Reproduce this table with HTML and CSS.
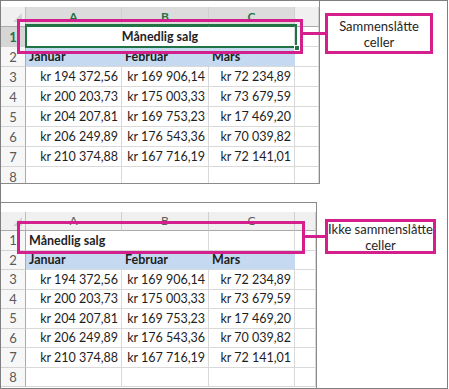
FILE: index.html
```html
<!DOCTYPE html>
<html lang="no">
<head>
<meta charset="utf-8">
<title>Sammenslåtte celler</title>
<link rel="stylesheet" href="styles.css">
</head>
<body>
<div class="frame">
  <div class="sheets">
    <div class="sheet sheet-top">
      <div class="grid">
        <div class="corner"></div>
        <div class="ch sel">A</div>
        <div class="ch sel">B</div>
        <div class="ch sel">C</div>
        <div class="ch"></div>

        <div class="rh rh-sel">1</div>
        <div class="c merged">Månedlig salg</div>
        <div class="c"></div>

        <div class="rh">2</div>
        <div class="c hd">Januar</div>
        <div class="c hd">Februar</div>
        <div class="c hd">Mars</div>
        <div class="c"></div>

        <div class="rh">3</div>
        <div class="c num">kr 194 372,56</div>
        <div class="c num">kr 169 906,14</div>
        <div class="c num">kr 72 234,89</div>
        <div class="c"></div>

        <div class="rh">4</div>
        <div class="c num">kr 200 203,73</div>
        <div class="c num">kr 175 003,33</div>
        <div class="c num">kr 73 679,59</div>
        <div class="c"></div>

        <div class="rh">5</div>
        <div class="c num">kr 204 207,81</div>
        <div class="c num">kr 169 753,23</div>
        <div class="c num">kr 17 469,20</div>
        <div class="c"></div>

        <div class="rh">6</div>
        <div class="c num">kr 206 249,89</div>
        <div class="c num">kr 176 543,36</div>
        <div class="c num">kr 70 039,82</div>
        <div class="c"></div>

        <div class="rh">7</div>
        <div class="c num">kr 210 374,88</div>
        <div class="c num">kr 167 716,19</div>
        <div class="c num">kr 72 141,01</div>
        <div class="c"></div>

        <div class="rh">8</div>
        <div class="c"></div>
        <div class="c"></div>
        <div class="c"></div>
        <div class="c"></div>
      </div>
      <div class="selection"><span class="handle"></span></div>
    </div>

    <div class="sheet sheet-bottom">
      <div class="grid grid-b">
        <div class="corner"></div>
        <div class="ch">A</div>
        <div class="ch">B</div>
        <div class="ch">C</div>
        <div class="ch"></div>

        <div class="rh">1</div>
        <div class="c title">Månedlig salg</div>
        <div class="c"></div>
        <div class="c"></div>
        <div class="c"></div>

        <div class="rh">2</div>
        <div class="c hd">Januar</div>
        <div class="c hd">Februar</div>
        <div class="c hd">Mars</div>
        <div class="c"></div>

        <div class="rh">3</div>
        <div class="c num">kr 194 372,56</div>
        <div class="c num">kr 169 906,14</div>
        <div class="c num">kr 72 234,89</div>
        <div class="c"></div>

        <div class="rh">4</div>
        <div class="c num">kr 200 203,73</div>
        <div class="c num">kr 175 003,33</div>
        <div class="c num">kr 73 679,59</div>
        <div class="c"></div>

        <div class="rh">5</div>
        <div class="c num">kr 204 207,81</div>
        <div class="c num">kr 169 753,23</div>
        <div class="c num">kr 17 469,20</div>
        <div class="c"></div>

        <div class="rh">6</div>
        <div class="c num">kr 206 249,89</div>
        <div class="c num">kr 176 543,36</div>
        <div class="c num">kr 70 039,82</div>
        <div class="c"></div>

        <div class="rh">7</div>
        <div class="c num">kr 210 374,88</div>
        <div class="c num">kr 167 716,19</div>
        <div class="c num">kr 72 141,01</div>
        <div class="c"></div>

        <div class="rh">8</div>
        <div class="c"></div>
        <div class="c"></div>
        <div class="c"></div>
        <div class="c"></div>
      </div>
    </div>
  </div>

  <div class="mark mark-top"></div>
  <div class="link link-top"></div>
  <div class="callout callout-top">Sammenslåtte<br>celler</div>

  <div class="mark mark-bottom"></div>
  <div class="link link-bottom"></div>
  <div class="callout callout-bottom">Ikke sammenslåtte<br>celler</div>
</div>
</body>
</html>
```

FILE: styles.css
```css
* { box-sizing: border-box; }

html, body {
  margin: 0;
  padding: 0;
  background: #ffffff;
}

body {
  font-family: Lato, "Open Sans", "Liberation Sans", sans-serif;
  color: #1e1e1e;
}

.frame {
  position: relative;
  width: 448px;
  height: 389px;
  border: 1px solid #7f7f7f;
  background: #ffffff;
}

.sheets {
  display: flex;
  flex-direction: column;
}

.sheet {
  position: relative;
  overflow: hidden;
  background: #ffffff;
}

.sheet-top {
  width: 319px;
  height: 183px;
  padding-top: 6px;
  border-right: 1px solid #8a8a8a;
  border-bottom: 1px solid #8a8a8a;
}

.sheet-bottom {
  width: 316px;
  height: 186px;
  margin-top: 18px;
  padding-top: 8.5px;
  border-top: 1px solid #8a8a8a;
  border-right: 1px solid #8a8a8a;
}

.grid {
  display: grid;
  grid-template-columns: 25px 96px 87px 86px 1fr;
  grid-auto-rows: 20px;
  font-size: 12.5px;
}

.grid-b {
  grid-auto-rows: 19.5px;
}

.grid > div {
  display: flex;
  align-items: center;
  white-space: nowrap;
  overflow: hidden;
}

.corner {
  position: relative;
  background: #f0f0f0;
  border-right: 1px solid #bdbdbd;
  border-bottom: 1px solid #ababab;
}

.corner::after {
  content: "";
  position: absolute;
  right: 3px;
  bottom: 4px;
  width: 0;
  height: 0;
  border-left: 9px solid transparent;
  border-bottom: 9px solid #d2d2d2;
}

.ch {
  justify-content: center;
  background: #f0f0f0;
  color: #595959;
  border-right: 1px solid #d0d0d0;
  border-bottom: 1px solid #ababab;
  font-size: 12px;
}

.ch.sel {
  background: #dcdcdc;
  color: #217346;
  font-weight: 700;
  border-bottom: 2px solid #217346;
}

.rh {
  justify-content: center;
  background: #f7f7f7;
  color: #595959;
  border-right: 1px solid #ababab;
  border-bottom: 1px solid #d4d4d4;
  font-size: 13px;
}

.rh-sel {
  background: #d6d6d6;
  color: #217346;
  font-weight: 700;
}

.c {
  border-right: 1px solid #d9d9d9;
  border-bottom: 1px solid #d9d9d9;
  padding: 0 3px;
}

.merged {
  grid-column: span 3;
  justify-content: center;
  font-weight: 700;
}

.title {
  font-weight: 700;
  border-right: none !important;
}

.hd {
  background: #c5d9f1;
  font-weight: 700;
  border-right-color: #c5d9f1 !important;
  border-bottom-color: #d9d9d9;
}

.num {
  justify-content: flex-end;
}

.selection {
  position: absolute;
  left: 24px;
  top: 23px;
  width: 272px;
  height: 24px;
  border: 2px solid #217346;
}

.handle {
  position: absolute;
  right: -5px;
  bottom: -5px;
  width: 6px;
  height: 6px;
  background: #217346;
  border: 1px solid #ffffff;
}

.mark {
  position: absolute;
  border: 3px solid #d4208c;
}

.mark-top {
  left: 16px;
  top: 18px;
  width: 286px;
  height: 35px;
}

.mark-bottom {
  left: 16px;
  top: 220px;
  width: 288px;
  height: 33px;
}

.link {
  position: absolute;
  height: 3px;
  background: #d4208c;
}

.link-top {
  left: 301px;
  top: 31px;
  width: 25px;
}

.link-bottom {
  left: 303px;
  top: 234px;
  width: 23px;
}

.callout {
  position: absolute;
  display: flex;
  align-items: center;
  justify-content: center;
  text-align: center;
  border: 3px solid #d4208c;
  background: #ffffff;
  color: #262626;
  font-size: 13px;
  line-height: 16px;
}

.callout-top {
  left: 324px;
  top: 12px;
  width: 108px;
  height: 41px;
}

.callout-bottom {
  left: 324px;
  top: 218px;
  width: 111px;
  height: 35px;
}
```
